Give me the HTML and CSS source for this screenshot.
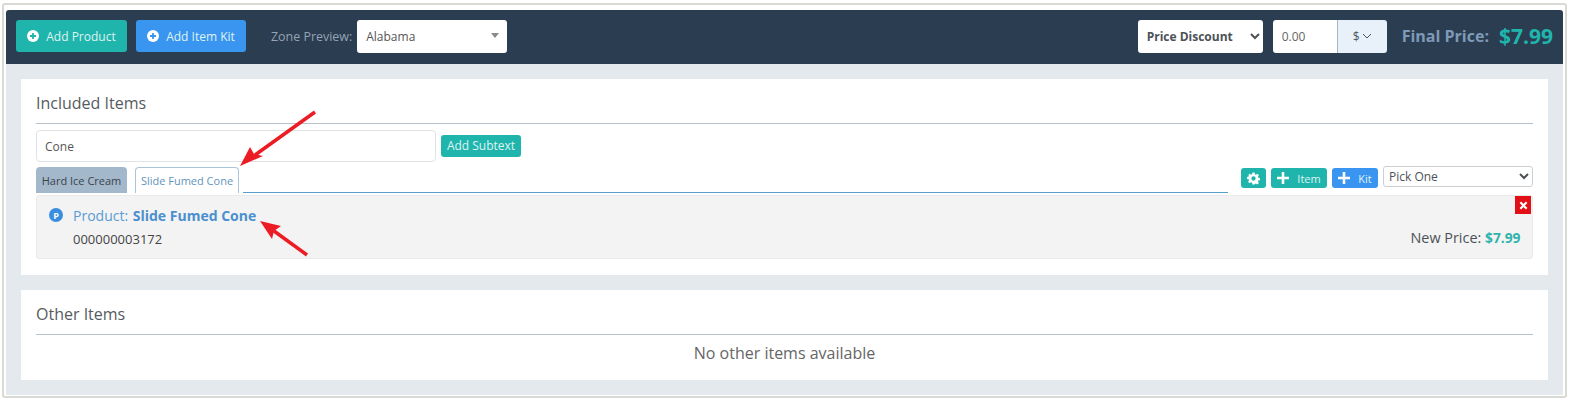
FILE: index.html
```html
<!DOCTYPE html>
<html lang="en">
<head>
<meta charset="utf-8">
<title>Kit editor</title>
<link rel="stylesheet" href="styles.css">
</head>
<body>
<div class="frame">
  <header class="topbar">
    <button class="btn btn-lg teal"><svg class="ico" viewBox="0 0 12 12"><circle cx="6" cy="6" r="6" fill="#fff"/><path d="M6 3v6M3 6h6" stroke="#1fb5ad" stroke-width="1.8"/></svg>Add Product</button>
    <button class="btn btn-lg blue"><svg class="ico" viewBox="0 0 12 12"><circle cx="6" cy="6" r="6" fill="#fff"/><path d="M6 3v6M3 6h6" stroke="#3a95f0" stroke-width="1.8"/></svg>Add Item Kit</button>
    <span class="zone-label">Zone Preview:</span>
    <div class="zone-select">Alabama<span class="caret"></span></div>
    <div class="spacer"></div>
    <select class="discount"><option>Price Discount</option></select>
    <div class="amount">
      <span class="amount-val">0.00</span>
      <span class="amount-unit">$<svg class="chev" viewBox="0 0 10 6"><path d="M1 1l4 4 4-4" fill="none" stroke="#4a5560" stroke-width="1"/></svg></span>
    </div>
    <div class="final"><span class="final-label">Final Price:</span><span class="final-val">$7.99</span></div>
  </header>
  <main class="content">
    <section class="card card-included">
      <h2 class="card-title">Included Items</h2>
      <div class="name-row">
        <div class="name-input">Cone</div>
        <button class="btn btn-sub teal">Add Subtext</button>
      </div>
      <div class="tabs-row">
        <div class="tab tab-grey">Hard Ice Cream</div>
        <div class="tab tab-active">Slide Fumed Cone</div>
        <div class="tab-line"></div>
        <div class="tools">
          <button class="btn btn-tool gear teal"><svg class="gear-ico" viewBox="0 0 24 24"><path fill="#fff" fill-rule="evenodd" d="M10 1h4l.6 3.2 1.9.8L19.2 3.2l2.8 2.8-1.8 2.7.8 1.9 3 .6v4l-3 .6-.8 1.9 1.8 2.7-2.8 2.8-2.7-1.8-1.9.8L14 23h-4l-.6-3.2-1.9-.8-2.7 1.8L2 18l1.8-2.7-.8-1.9-3-.6V9l3-.6.8-1.9L2 6l2.800-2.800L7.500 5l1.900-.8zM12 8a4 4 0 1 0 0 8 4 4 0 0 0 0-8z"/></svg></button>
          <button class="btn btn-tool teal"><svg class="plus" viewBox="0 0 12 12"><path d="M6 0v12M0 6h12" stroke="#fff" stroke-width="2.600"/></svg>Item</button>
          <button class="btn btn-tool blue"><svg class="plus" viewBox="0 0 12 12"><path d="M6 0v12M0 6h12" stroke="#fff" stroke-width="2.600"/></svg>Kit</button>
          <select class="pick"><option>Pick One</option></select>
        </div>
      </div>
      <div class="item">
        <div class="item-main">
          <div class="item-title"><span class="p-badge">P</span>Product: <b>Slide Fumed Cone</b></div>
          <div class="item-sku">000000003172</div>
        </div>
        <div class="item-side">
          <button class="remove"><svg viewBox="0 0 10 10"><path d="M1.500 1.500l7 7M8.500 1.500l-7 7" stroke="#fff" stroke-width="2.400"/></svg></button>
          <div class="new-price">New Price: <b>$7.99</b></div>
        </div>
      </div>
    </section>
    <section class="card card-other">
      <h2 class="card-title">Other Items</h2>
      <p class="empty">No other items available</p>
    </section>
  </main>
</div>
<svg class="arrows" width="1569" height="401" viewBox="0 0 1569 401">
  <path d="M315 112 L255 155" stroke="#ec1c24" stroke-width="3.500" fill="none"/>
  <path d="M240 166 L250 147 L254 154 L263 156 Z" fill="#ec1c24"/>
  <path d="M307 255 L274 231" stroke="#ec1c24" stroke-width="3.500" fill="none"/>
  <path d="M260 221 L281 226 L274 231 L272 239 Z" fill="#ec1c24"/>
</svg>
</body>
</html>
```
FILE: styles.css
```css
* { box-sizing: border-box; }
html, body { margin: 0; padding: 0; background: #fff; }
body {
  position: relative;
  width: 1569px;
  height: 401px;
  overflow: hidden;
  font-family: "Open Sans", "Liberation Sans", sans-serif;
  font-size: 12px;
  color: #4c5257;
  padding: 3px 2px 0 2px;
}
button { font-family: inherit; border: 0; cursor: pointer; }
.frame {
  width: 1565px;
  height: 395px;
  border: 2px solid #d9d9d5;
  border-radius: 3px;
  padding: 5px 2px 1px;
  background: #fff;
  display: flex;
  flex-direction: column;
}
.topbar {
  height: 54px;
  flex: none;
  background: #2b3d50;
  border-radius: 3px 3px 0 0;
  display: flex;
  align-items: center;
  padding: 0 10px 2px;
}
.btn {
  color: #dff3f1;
  border-radius: 3px;
  display: inline-flex;
  align-items: center;
  justify-content: center;
  padding: 0;
}
.teal { background: #1fb5ad; }
.blue { background: #3a95f0; }
.btn-lg { height: 32px; font-size: 12px; }
.btn-lg.teal { width: 111px; margin-right: 9px; }
.btn-lg.blue { width: 110px; }
.ico { width: 12px; height: 12px; margin-right: 7px; }
.zone-label { color: #94a3b5; font-size: 12.45px; margin-left: 25px; margin-right: 5px; }
.zone-select {
  width: 150px; height: 33px;
  background: #fff; border-radius: 3px;
  color: #555; font-size: 12px;
  display: flex; align-items: center; justify-content: space-between;
  padding: 1px 8px 0 9px;
}
.caret { width: 0; height: 0; border-left: 4px solid transparent; border-right: 4px solid transparent; border-top: 5px solid #8a8a8a; margin-bottom: 3px; }
.spacer { flex: 1; }
.discount {
  width: 125px; height: 33px;
  border: 0; border-radius: 3px; background: #fff;
  font-family: inherit; font-size: 12px; font-weight: 700; color: #4c5257;
  padding-left: 5px;
  margin-right: 10px;
}
.amount { display: flex; width: 114px; height: 33px; border-radius: 3px; overflow: hidden; margin-right: 15px; }
.amount-val { width: 64px; background: #fff; color: #666; display: flex; align-items: center; padding-left: 9px; }
.amount-unit { flex: 1; background: #e8f1fa; border-left: 1px solid #aab4be; color: #4a5560; display: flex; align-items: center; justify-content: center; gap: 2px; }
.chev { width: 10px; height: 6px; }
.final { display: flex; align-items: center; gap: 10px; }
.final-label { color: #7f9ab8; font-size: 16px; font-weight: 700; }
.final-val { color: #1fb5ad; font-size: 21px; font-weight: 700; }
.content {
  flex: 1;
  background: #e4e9ed;
  padding: 15px 15px 0;
  display: flex;
  flex-direction: column;
  gap: 15px;
}
.card { background: #fff; padding: 0 15px; }
.card-included { height: 196px; }
.card-other { height: 90px; }
.card-title {
  margin: 0;
  height: 45px;
  border-bottom: 1px solid #b9c2c8;
  font-size: 16px;
  font-weight: 400;
  color: #555b60;
  line-height: 48px;
}
.name-row { display: flex; align-items: center; margin-top: 6px; gap: 5px; }
.name-input {
  width: 400px; height: 32px;
  border: 1px solid #dfe3e6; border-radius: 4px;
  font-size: 12px; color: #555;
  display: flex; align-items: center; padding-left: 8px;
}
.btn-sub { width: 80px; height: 22px; font-size: 12px; padding-bottom: 2px; }
.tabs-row { display: flex; align-items: flex-end; height: 26px; margin-top: 5px; position: relative; }
.tab { height: 26px; font-size: 11px; display: flex; align-items: center; justify-content: center; border-radius: 4px 4px 0 0; }
.tab-grey { width: 91px; background: #a3b8cb; color: #3c444b; margin-right: 8px; }
.tab-active { width: 104px; background: #fff; color: #5f94bd; border: 1px solid #a9c5d9; border-bottom: 0; margin-right: 4px; }
.tab-line { width: 985px; height: 1px; background: #5b9dc9; }
.tools { display: flex; align-items: flex-start; position: absolute; right: 0; top: -1px; }
.btn-tool { height: 20px; margin-top: 2px; font-size: 11px; margin-right: 5px; }
.btn-tool.gear { width: 25px; margin-right: 5px; }
.btn-tool.teal:not(.gear) { width: 56px; }
.btn-tool.blue { width: 46px; }
.gear-ico { width: 13px; height: 13px; }
.plus { width: 12px; height: 12px; margin-right: 8px; }
.pick {
  width: 150px; height: 21px;
  background: #fff; border: 1px solid #ccd0d3; border-radius: 3px;
  font-family: inherit; font-size: 12px; color: #4c5257;
  padding-left: 1px;
}
.item {
  margin-top: 2px;
  height: 64px;
  background: #f3f3f3;
  border: 1px solid #eaeaea;
  border-radius: 3px;
  display: flex;
  justify-content: space-between;
  padding: 0 0 0 12px;
}
.item-title { display: flex; align-items: center; font-size: 14px; color: #5b9bd5; height: 20px; margin-top: 9px; white-space: pre; }
.item-title b { color: #4a8fcf; font-weight: 700; margin-left: 1px; }
.p-badge {
  width: 14px; height: 14px; border-radius: 50%;
  background: #3a8ee0; color: #fff; font-size: 9px; font-weight: 700;
  display: flex; align-items: center; justify-content: center; margin-right: 10px;
}
.item-sku { font-size: 13px; color: #444; margin-left: 24px; margin-top: 5px; }
.item-side { display: flex; flex-direction: column; align-items: flex-end; }
.remove {
  width: 16px; height: 18px; background: #e30f16; border-radius: 0; margin-right: 1px;
  display: flex; align-items: center; justify-content: center; padding: 0;
}
.remove svg { width: 9px; height: 9px; }
.new-price { font-size: 14.4px; color: #4c5257; margin-top: 14px; margin-right: 11.500px; line-height: 20px; }
.new-price b { color: #30b3ad; font-size: 13.8px; }
.empty { margin: 0; text-align: center; font-size: 16px; color: #666; line-height: 36px; }
.arrows { position: absolute; left: 0; top: 0; pointer-events: none; }
```
